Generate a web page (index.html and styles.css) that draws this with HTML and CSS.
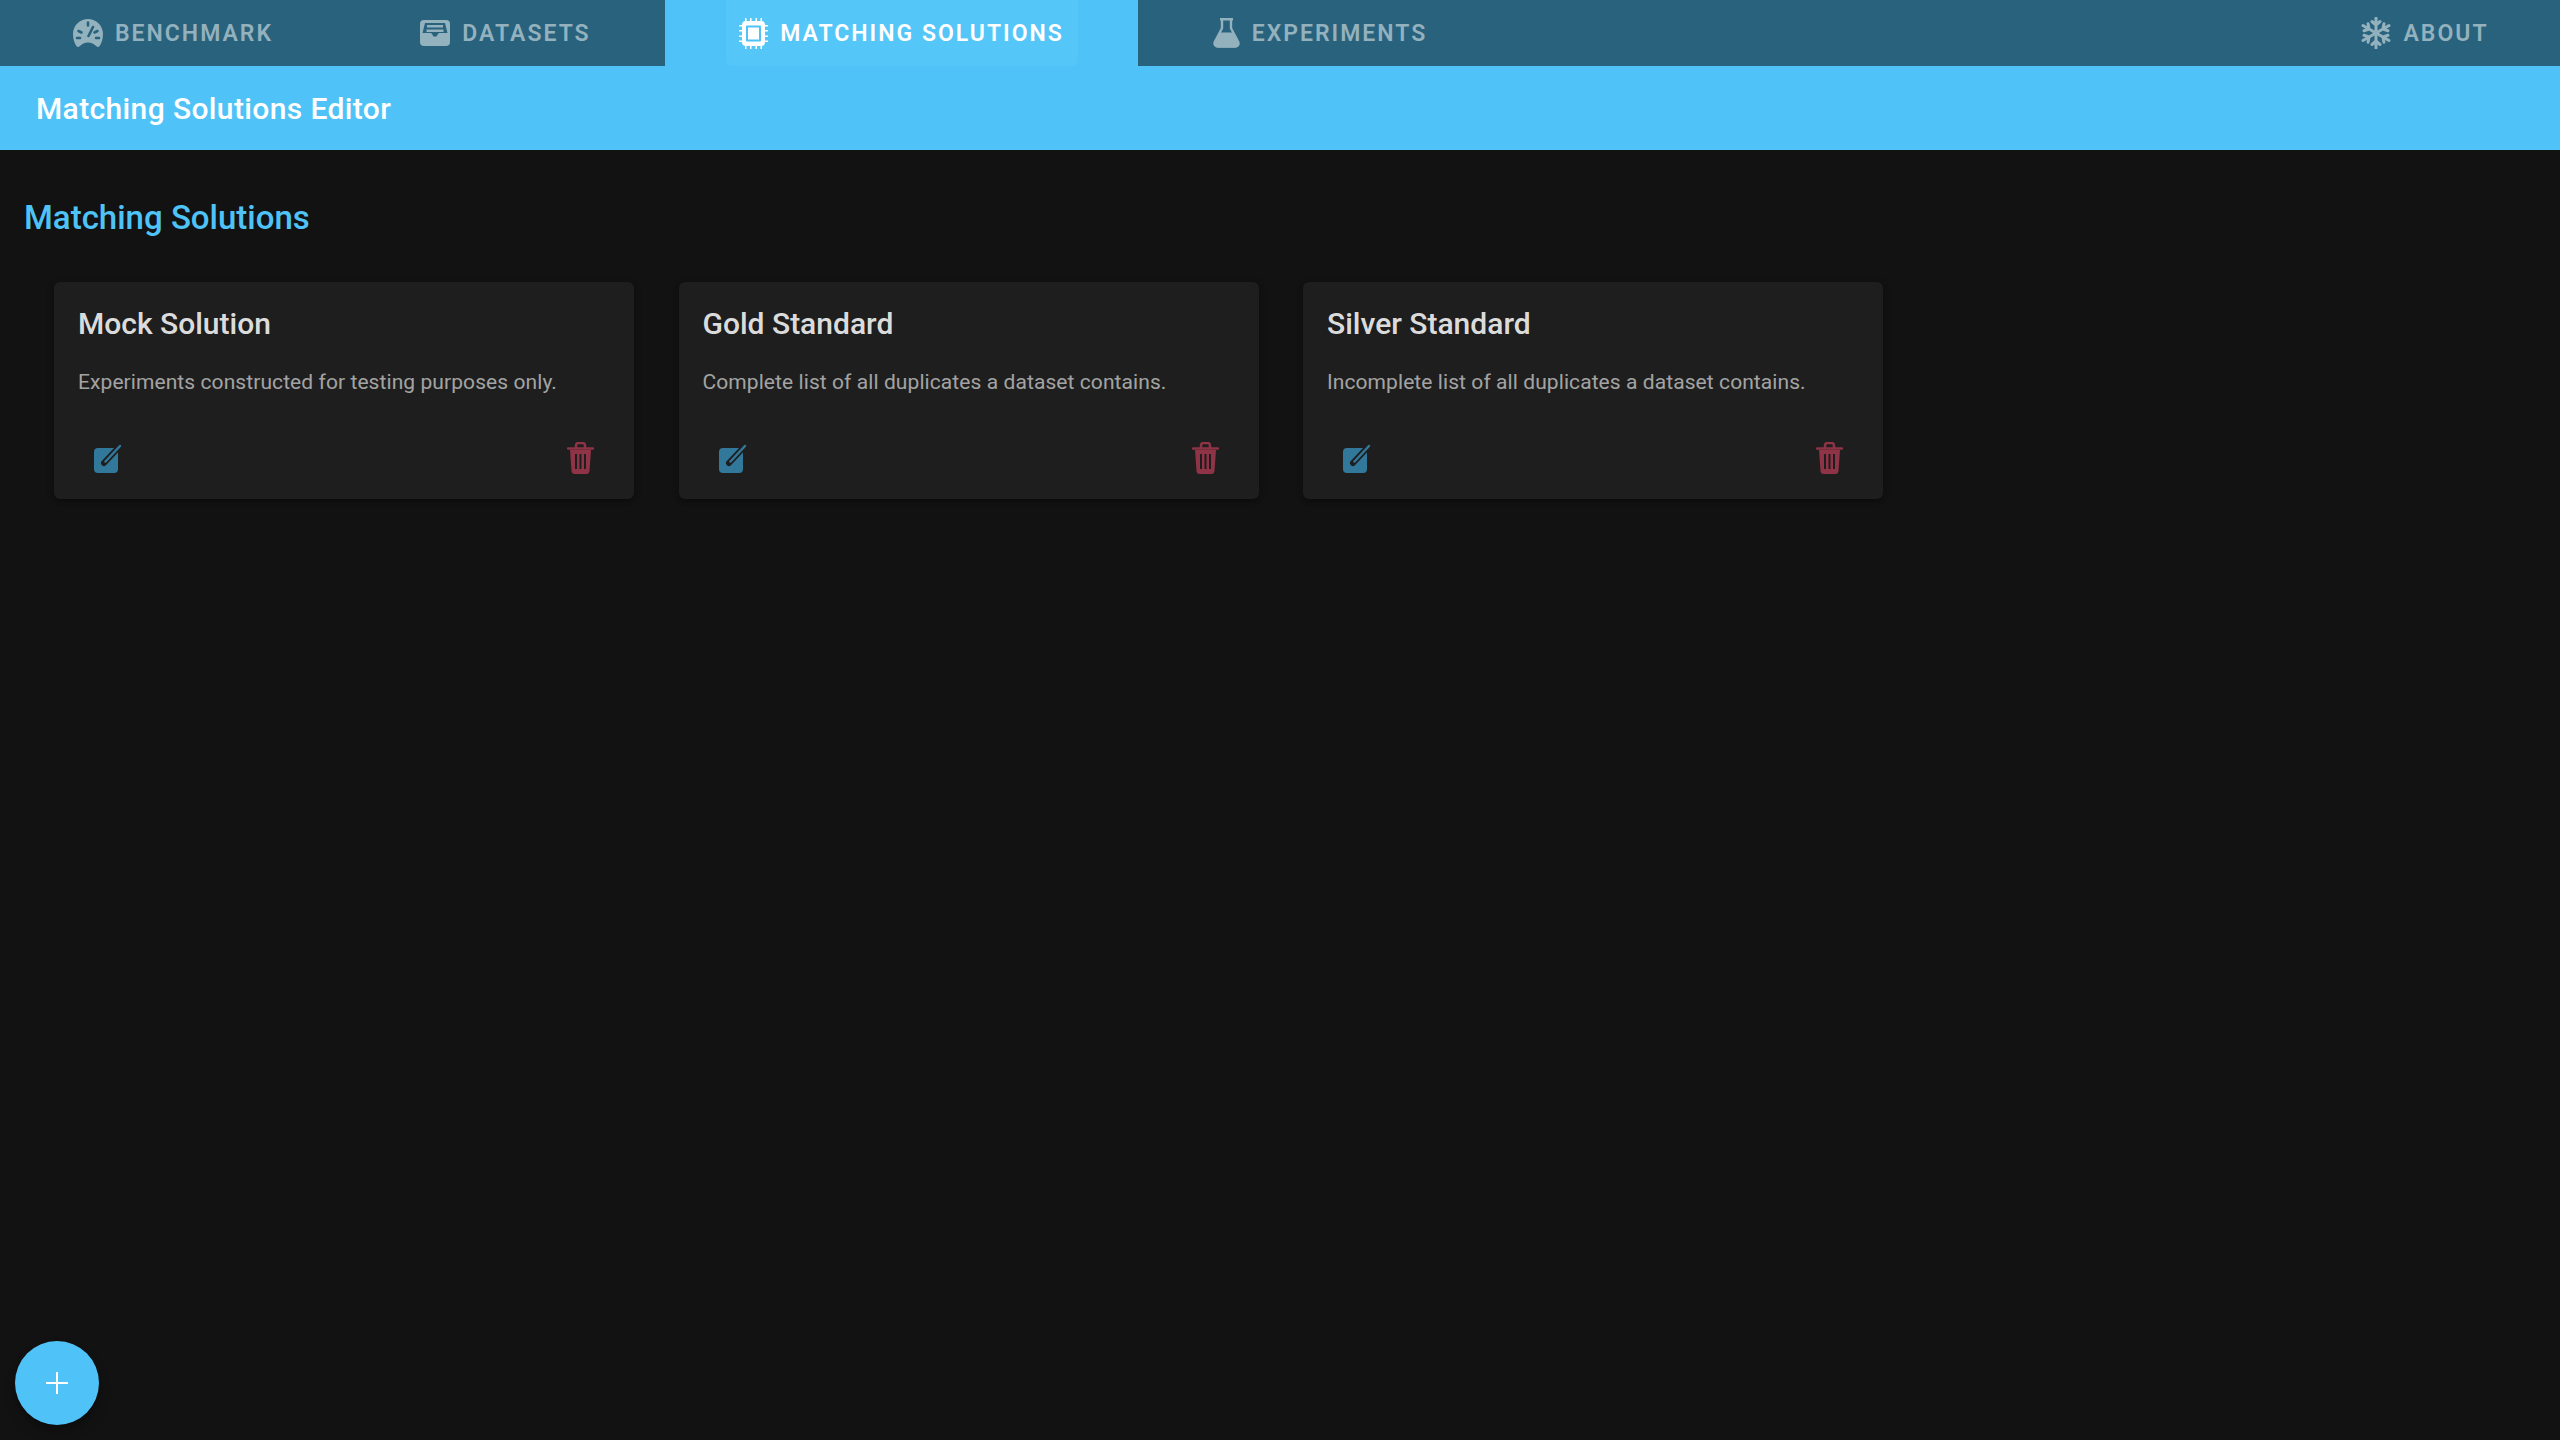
FILE: index.html
```html
<!DOCTYPE html>
<html lang="en">
<head>
<meta charset="utf-8">
<title>Matching Solutions Editor</title>
<link rel="stylesheet" href="styles.css">
</head>
<body>
<nav class="tabs">
  <a class="tab tab-benchmark">
    <svg class="tab-icon gauge" viewBox="0 0 30 28"><path class="fill" d="M15 0C6.7 0 0 6.7 0 15c0 4.600 1.300 9.300 3.600 12.300.8 1 2 .9 3-.1C9 25 11.800 23.500 15 23.500s6 1.500 8.400 3.700c1 1 2.200 1.100 3 .1C28.700 24.300 30 19.600 30 15 30 6.700 23.300 0 15 0z"/><path class="cut" d="M15 3.500v3M5.500 12l3 1.500M24.500 12l-3 1.500M4 19h3M23 19h3M20 8 15.500 17"/></svg>
    <span>BENCHMARK</span>
  </a>
  <a class="tab tab-datasets">
    <svg class="tab-icon inbox" viewBox="0 0 30 26"><rect class="fill" width="30" height="26" rx="4"/><path class="hole" d="M5 3h20l2.500 10H19.500c-.8 0-1.200.4-1.500 1l-1.500 2.500h-3L12 14c-.3-.6-.7-1-1.500-1H2.500z"/><path class="fill" d="M7 5h16v2.500H7zM6.500 9.500h17V12h-17z"/></svg>
    <span>DATASETS</span>
  </a>
  <a class="tab tab-active">
    <span class="tab-highlight">
      <svg class="tab-icon chip" viewBox="0 0 29 31"><path class="fill" d="M6 0h1.500v4H6zM11 0h1.500v4H11zM16.500 0H18v4h-1.500zM21.500 0H23v4h-1.500zM6 27h1.500v4H6zM11 27h1.500v4H11zM16.500 27H18v4h-1.500zM21.500 27H23v4h-1.500zM0 7h4v1.500H0zM0 12h4v1.500H0zM0 17.500h4V19H0zM0 22.500h4V24H0zM25 7h4v1.500h-4zM25 12h4v1.500h-4zM25 17.500h4V19h-4zM25 22.500h4V24h-4z"/><rect class="fill" x="3" y="3" width="23" height="25" rx="4"/><rect class="hole" x="7" y="7.500" width="15" height="16" rx="1"/><rect class="fill" x="9" y="9.500" width="11" height="12"/></svg>
      <span>MATCHING SOLUTIONS</span>
    </span>
  </a>
  <a class="tab tab-experiments">
    <svg class="tab-icon flask" viewBox="0 0 27 30"><path class="outline" d="M7 1.200h13M9 1.200v9L2 23.500c-1.300 2.600 0 5 3 5h17c3 0 4.300-2.400 3-5L18 10.200v-9"/><path class="fill" d="M6.300 14.500h14.400L26 25c.6 2.400-1 4.500-4 4.500H5C2 29.500.4 27.400 1 25z"/></svg>
    <span>EXPERIMENTS</span>
  </a>
  <span class="tab-spacer"></span>
  <a class="tab tab-about">
    <svg class="tab-icon snow" viewBox="0 0 30 32"><g class="flake"><path d="M15 1v30M11 4.500l4 3.500 4-3.500M11 27.500l4-3.500 4 3.500"/><path d="M15 1v30M11 4.500l4 3.500 4-3.500M11 27.500l4-3.500 4 3.500" transform="rotate(60 15 16)"/><path d="M15 1v30M11 4.500l4 3.500 4-3.500M11 27.500l4-3.500 4 3.500" transform="rotate(120 15 16)"/></g></svg>
    <span>ABOUT</span>
  </a>
</nav>
<header class="app-bar">
  <h1>Matching Solutions Editor</h1>
</header>
<main class="content">
  <h2 class="section-title">Matching Solutions</h2>
  <div class="cards">
    <article class="card">
      <h3>Mock Solution</h3>
      <p>Experiments constructed for testing purposes only.</p>
      <div class="actions">
        <svg class="edit" viewBox="0 0 28 30"><rect class="edit-box" y="4" width="24" height="25" rx="4"/><path class="edit-pen-bg" d="M10 19 25 3"/><path class="edit-pen" d="M11.500 17.500 26 2"/></svg>
        <svg class="trash" viewBox="0 0 27 32"><path class="trash-lid" d="M9 6V3.500C9 2 10 1 11.500 1h4C17 1 18 2 18 3.500V6"/><path class="trash-lid" d="M1 6.500h25"/><path class="trash-body" d="M3 8h21l-1.500 21c-.1 1.700-1.300 3-3 3h-12c-1.700 0-2.900-1.300-3-3z"/><path class="trash-slots" d="M9 12v15M13.500 12v15M18 12v15"/></svg>
      </div>
    </article>
    <article class="card">
      <h3>Gold Standard</h3>
      <p>Complete list of all duplicates a dataset contains.</p>
      <div class="actions">
        <svg class="edit" viewBox="0 0 28 30"><rect class="edit-box" y="4" width="24" height="25" rx="4"/><path class="edit-pen-bg" d="M10 19 25 3"/><path class="edit-pen" d="M11.500 17.500 26 2"/></svg>
        <svg class="trash" viewBox="0 0 27 32"><path class="trash-lid" d="M9 6V3.500C9 2 10 1 11.500 1h4C17 1 18 2 18 3.500V6"/><path class="trash-lid" d="M1 6.500h25"/><path class="trash-body" d="M3 8h21l-1.500 21c-.1 1.700-1.300 3-3 3h-12c-1.700 0-2.900-1.300-3-3z"/><path class="trash-slots" d="M9 12v15M13.500 12v15M18 12v15"/></svg>
      </div>
    </article>
    <article class="card">
      <h3>Silver Standard</h3>
      <p>Incomplete list of all duplicates a dataset contains.</p>
      <div class="actions">
        <svg class="edit" viewBox="0 0 28 30"><rect class="edit-box" y="4" width="24" height="25" rx="4"/><path class="edit-pen-bg" d="M10 19 25 3"/><path class="edit-pen" d="M11.500 17.500 26 2"/></svg>
        <svg class="trash" viewBox="0 0 27 32"><path class="trash-lid" d="M9 6V3.500C9 2 10 1 11.500 1h4C17 1 18 2 18 3.500V6"/><path class="trash-lid" d="M1 6.500h25"/><path class="trash-body" d="M3 8h21l-1.500 21c-.1 1.700-1.300 3-3 3h-12c-1.700 0-2.900-1.300-3-3z"/><path class="trash-slots" d="M9 12v15M13.500 12v15M18 12v15"/></svg>
      </div>
    </article>
  </div>
</main>
<button class="fab" aria-label="Add">
  <svg viewBox="0 0 22 22"><path d="M11 0v22M0 11h22"/></svg>
</button>
</body>
</html>
```
FILE: styles.css
```css
* { box-sizing: border-box; }
html, body { height: 100%; }
body {
  margin: 0;
  background: #121212;
  font-family: Roboto, "Liberation Sans", sans-serif;
  color: #fff;
  overflow: hidden;
}
.tabs {
  display: grid;
  grid-template-columns: 346px 319px 473px 364px 1fr 270px;
  height: 66px;
  background: #28627d;
}
.tab {
  display: flex;
  align-items: center;
  justify-content: center;
  gap: 12px;
  height: 66px;
  color: #94b1be;
  font-size: 23px;
  font-weight: 600;
  letter-spacing: 2px;
  --icon: #94b1be;
  --bg: #28627d;
}
.tab-active {
  background: #4fc3f7;
  color: #fff;
  --icon: #fff;
  --bg: #4fc3f7;
}
.tab-highlight {
  display: flex;
  align-items: center;
  justify-content: center;
  gap: 12px;
  width: 352px;
  height: 66px;
  background: #55c6f8;
  border-radius: 0 0 6px 6px;
}
.tab-icon { display: block; flex: none; }
.gauge { width: 30px; height: 28px; }
.inbox { width: 30px; height: 26px; }
.chip { width: 29px; height: 31px; }
.flask { width: 27px; height: 30px; }
.snow { width: 30px; height: 32px; }
.fill { fill: var(--icon); }
.hole { fill: var(--bg); }
.cut { fill: none; stroke: var(--bg); stroke-width: 2.6; stroke-linecap: round; }
.outline { fill: none; stroke: var(--icon); stroke-width: 2.4; }
.flake path { fill: none; stroke: var(--icon); stroke-width: 3; stroke-linecap: round; stroke-linejoin: round; }
.app-bar {
  display: flex;
  align-items: center;
  height: 84px;
  padding: 0 36px;
  background: #4fc3f7;
}
.app-bar h1 {
  margin: 0;
  font-size: 30px;
  font-weight: 500;
  letter-spacing: .375px;
  color: #fff;
}
.content { padding: 44px 24px 0; }
.section-title {
  margin: 0;
  font-size: 33px;
  line-height: 48px;
  font-weight: 500;
  color: #4fc3f7;
}
.cards {
  display: grid;
  grid-template-columns: repeat(3, 580px);
  column-gap: 44.5px;
  margin: 40px 0 0 30px;
}
.card {
  height: 217px;
  padding: 18px 24px 0;
  background: #1e1e1e;
  border-radius: 6px;
  box-shadow: 0 3px 3px -2px rgba(0,0,0,.2), 0 3px 4px rgba(0,0,0,.14), 0 1px 8px rgba(0,0,0,.12);
}
.card h3 {
  margin: 0;
  font-size: 30px;
  line-height: 48px;
  font-weight: 500;
  color: rgba(255,255,255,.87);
}
.card p {
  margin: 19px 0 0;
  font-size: 21px;
  line-height: 30px;
  font-weight: 400;
  letter-spacing: .08px;
  color: rgba(255,255,255,.6);
}
.actions {
  display: flex;
  justify-content: space-between;
  align-items: flex-end;
  margin-top: 45px;
  padding: 0 16px;
}
.edit { display: block; width: 28px; height: 30px; }
.trash { display: block; width: 27px; height: 32px; }
.edit-box { fill: #32789a; }
.edit-pen-bg { stroke: #1e1e1e; stroke-width: 6; stroke-linecap: round; fill: none; }
.edit-pen { stroke: #32789a; stroke-width: 2.500; stroke-linecap: round; fill: none; }
.trash-lid { fill: none; stroke: #8f3346; stroke-width: 2.500; stroke-linecap: round; }
.trash-body { fill: #8f3346; }
.trash-slots { fill: none; stroke: #1e1e1e; stroke-width: 2; }
.fab {
  position: fixed;
  left: 15px;
  bottom: 15px;
  display: flex;
  align-items: center;
  justify-content: center;
  width: 84px;
  height: 84px;
  padding: 0;
  border: 0;
  border-radius: 50%;
  background: #4fc3f7;
  box-shadow: 0 5px 8px rgba(0,0,0,.2), 0 8px 14px rgba(0,0,0,.14);
}
.fab svg { display: block; width: 22px; height: 22px; }
.fab path { fill: none; stroke: #fff; stroke-width: 2; }
```
